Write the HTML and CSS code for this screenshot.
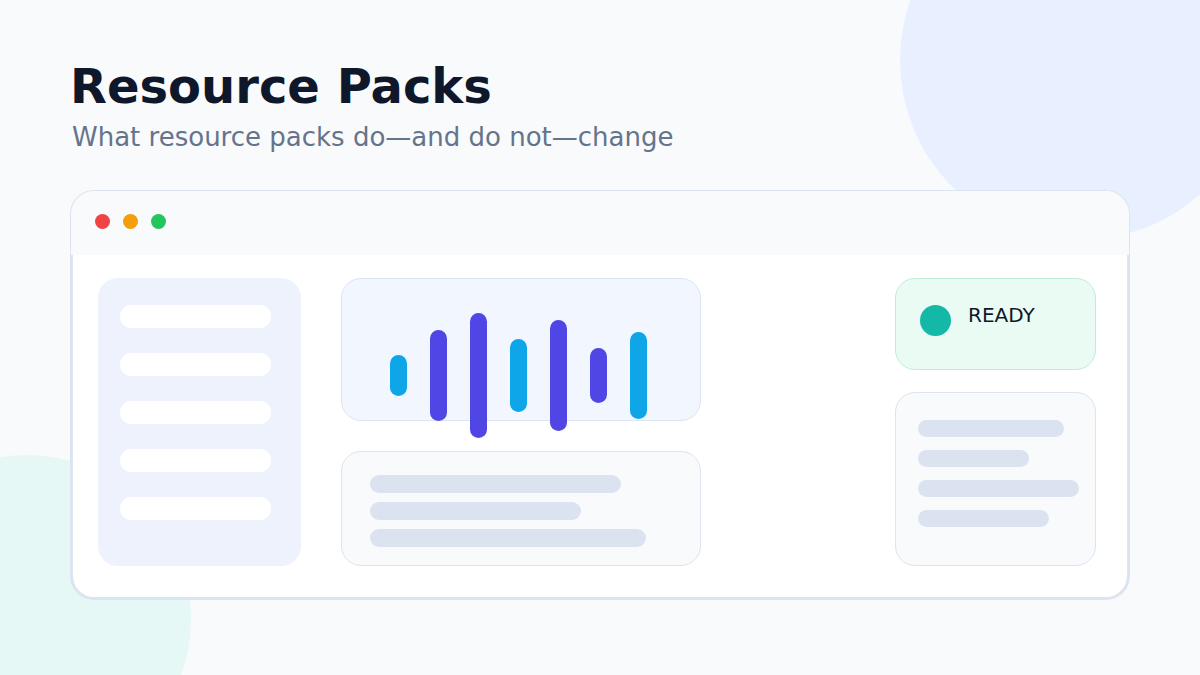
FILE: index.html
```html
<!DOCTYPE html>
<html lang="en">
<head>
<meta charset="utf-8">
<title>Resource Packs</title>
<link rel="stylesheet" href="styles.css">
</head>
<body>
<div class="page">
  <div class="blob blob-top"></div>
  <div class="blob blob-bottom"></div>
  <header class="head">
    <h1 class="title">Resource Packs</h1>
    <p class="subtitle">What resource packs do—and do not—change</p>
  </header>
  <div class="window">
    <div class="titlebar">
      <span class="light red"></span>
      <span class="light amber"></span>
      <span class="light green"></span>
    </div>
    <div class="content">
      <aside class="sidebar">
        <div class="pill"></div>
        <div class="pill"></div>
        <div class="pill"></div>
        <div class="pill"></div>
        <div class="pill"></div>
      </aside>
      <section class="middle">
        <div class="wave">
          <span class="bar cyan" style="height:41px"></span>
          <span class="bar indigo" style="height:91px"></span>
          <span class="bar indigo" style="height:125px"></span>
          <span class="bar cyan" style="height:73px"></span>
          <span class="bar indigo" style="height:111px"></span>
          <span class="bar indigo" style="height:55px"></span>
          <span class="bar cyan" style="height:87px"></span>
        </div>
        <div class="card lines-card">
          <div class="line" style="width:251px"></div>
          <div class="line" style="width:211px"></div>
          <div class="line" style="width:276px"></div>
        </div>
      </section>
      <section class="right">
        <div class="ready">
          <span class="ready-dot"></span>
          <span class="ready-text">READY</span>
        </div>
        <div class="card info-card">
          <div class="line small" style="width:146px"></div>
          <div class="line small" style="width:111px"></div>
          <div class="line small" style="width:161px"></div>
          <div class="line small" style="width:131px"></div>
        </div>
      </section>
    </div>
  </div>
</div>
</body>
</html>
```

FILE: styles.css
```css
* { box-sizing: border-box; }

html, body {
  margin: 0;
  padding: 0;
  background: #f8fafc;
  font-family: "DejaVu Sans", "Noto Sans", sans-serif;
}

.page {
  position: relative;
  width: 1200px;
  height: 675px;
  overflow: hidden;
  padding: 58px 70px 0 70px;
}

.blob {
  position: absolute;
  border-radius: 50%;
  z-index: 0;
}

.blob-top {
  width: 360px;
  height: 360px;
  left: 900px;
  top: -120px;
  background: #e8effe;
}

.blob-bottom {
  width: 328px;
  height: 328px;
  left: -137px;
  top: 455px;
  background: #e6f8f5;
}

.head {
  position: relative;
  z-index: 1;
}

.title {
  margin: 0;
  font-size: 48px;
  font-weight: 700;
  color: #0f172a;
  line-height: 56px;
  letter-spacing: 0;
}

.subtitle {
  margin: 8px 0 0 2px;
  font-size: 26px;
  line-height: 30px;
  color: #64748b;
}

.window {
  position: relative;
  z-index: 1;
  margin-top: 38px;
  width: 1060px;
  height: 410px;
  border: 3px solid #dde4f1;
  border-top-width: 1px;
  border-radius: 24px;
  background: #ffffff;
}

.titlebar {
  height: 64px;
  margin: 0 -2px;
  background: #f8fafc;
  border-radius: 23px 23px 0 0;
  display: flex;
  align-items: center;
  gap: 13px;
  padding-left: 24px;
  padding-bottom: 4px;
}

.light {
  width: 15px;
  height: 15px;
  border-radius: 50%;
}
.red { background: #ef4444; }
.amber { background: #f59e0b; }
.green { background: #22c55e; }

.content {
  display: flex;
  padding: 23px 31px 31px 25px;
  height: 345px;
}

.sidebar {
  width: 203px;
  height: 288px;
  background: #edf2fd;
  border-radius: 20px;
  padding: 27px 0 0 22px;
  display: flex;
  flex-direction: column;
  gap: 25px;
}

.pill {
  width: 151px;
  height: 23px;
  background: #ffffff;
  border-radius: 11px;
}

.middle {
  margin-left: 40px;
  width: 360px;
  display: flex;
  flex-direction: column;
  gap: 30px;
}

.wave {
  height: 143px;
  background: #f2f6fe;
  border: 1px solid #dde4f1;
  border-radius: 20px;
  display: flex;
  align-items: center;
  gap: 23px;
  padding: 51px 0 0 48px;
}

.bar {
  flex: none;
  width: 17px;
  border-radius: 9px;
}
.cyan { background: #0ea5e9; }
.indigo { background: #4f46e5; }

.card {
  background: #f8fafc;
  border: 1px solid #dde4f1;
  border-radius: 20px;
  display: flex;
  flex-direction: column;
}

.lines-card {
  height: 115px;
  padding: 23px 0 0 28px;
  gap: 9px;
}

.line {
  height: 18px;
  border-radius: 9px;
  background: #dce3f0;
}

.line.small {
  height: 17px;
  border-radius: 9px;
}

.right {
  margin-left: auto;
  width: 201px;
  display: flex;
  flex-direction: column;
  gap: 22px;
}

.ready {
  height: 92px;
  background: #eafbf4;
  border: 1px solid #bdeed9;
  border-radius: 20px;
  display: flex;
  align-items: flex-start;
  padding: 25px 0 0 24px;
}

.ready-dot {
  width: 31px;
  height: 31px;
  border-radius: 50%;
  background: #14b8a6;
  margin-top: 1px;
}

.ready-text {
  margin-left: 17px;
  margin-top: 0;
  font-size: 20px;
  color: #0f172a;
  line-height: 23px;
}

.info-card {
  height: 174px;
  padding: 27px 0 0 22px;
  gap: 13px;
}
```
